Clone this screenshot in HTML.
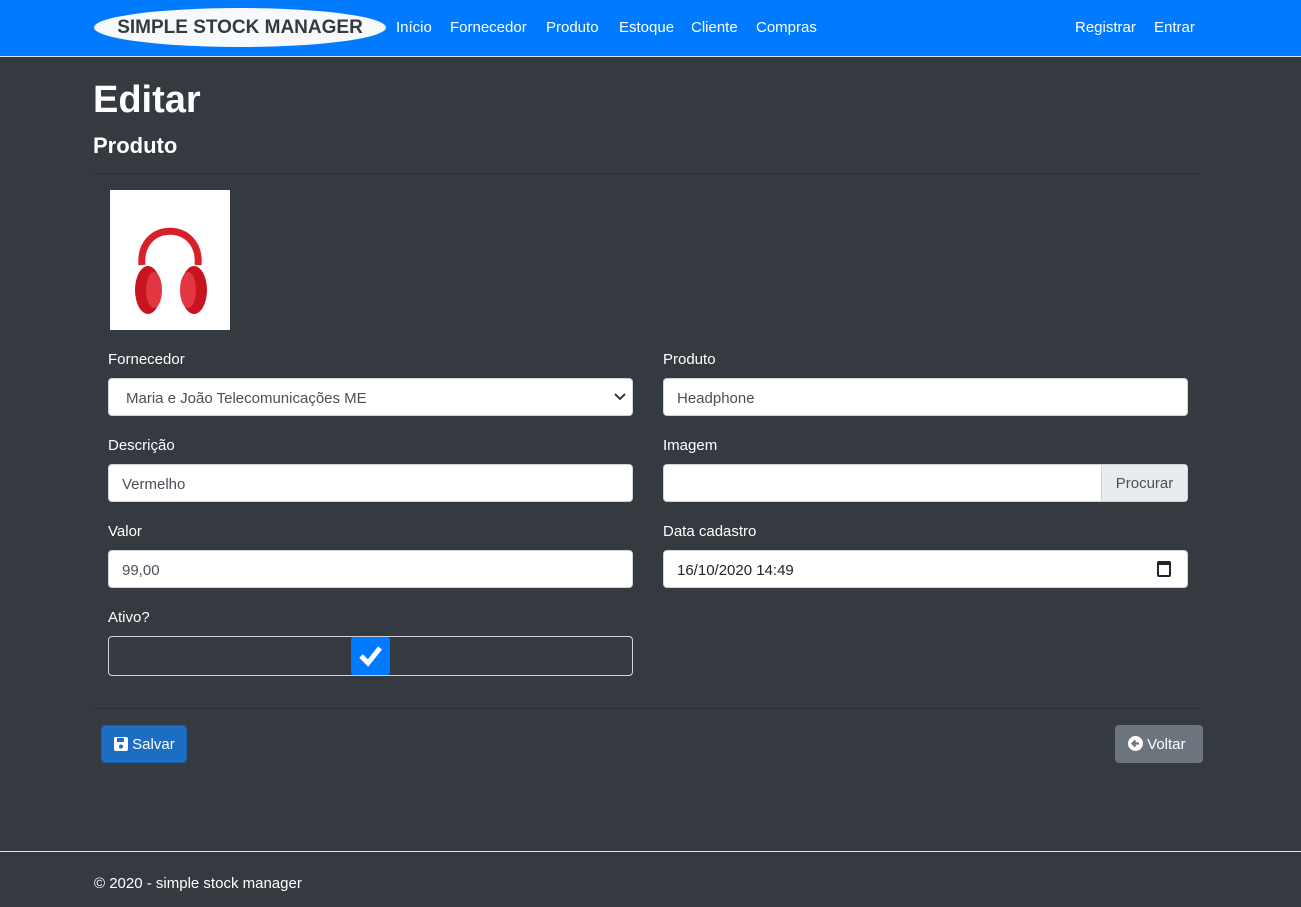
<!DOCTYPE html>
<html><head><meta charset="utf-8"><style>
*{box-sizing:border-box;margin:0;padding:0}
body{width:1301px;height:907px;background:#343a40;font-family:"Liberation Sans",sans-serif;color:#fff;position:relative;overflow:hidden;font-size:15px}
.nav{position:absolute;left:0;top:0;width:1301px;height:57px;background:#007bff;border-bottom:1px solid #e0e0e0}
.brand{position:absolute;left:94px;top:8px;width:292px;height:39px;background:#f8f9fa;border-radius:50%;color:#343a40;font-weight:bold;font-size:19px;text-align:center;line-height:39px}
.nav a{position:absolute;top:19px;color:#fff;font-size:15px}
.abs{position:absolute}
label{position:absolute;font-size:15px;color:#fff;margin-top:1px}
.in{position:absolute;height:38px;background:#fff;border:1px solid #ced4da;border-radius:4px;color:#495057;font-size:15px;line-height:40px;padding-left:13px}
hr{position:absolute;border:0;border-top:1px solid #2b3035;height:0}
.btn{position:absolute;height:38px;border-radius:4px;font-size:15px;line-height:38px;color:#fff}
</style></head><body>
<div class="nav">
<div class="brand">SIMPLE STOCK MANAGER</div>
<a style="left:396px">Início</a><a style="left:450px">Fornecedor</a><a style="left:546px">Produto</a><a style="left:619px">Estoque</a><a style="left:691px">Cliente</a><a style="left:756px">Compras</a>
<a style="left:1075px">Registrar</a><a style="left:1154px">Entrar</a>
</div>
<div class="abs" style="left:93px;top:79px;font-size:38px;font-weight:bold">Editar</div>
<div class="abs" style="left:93px;top:133px;font-size:22px;font-weight:bold">Produto</div>
<hr style="left:93px;top:173px;width:1108px">
<div class="abs" style="left:110px;top:190px;width:120px;height:140px;background:#fff">
<svg width="120" height="140" viewBox="0 0 120 140"><path d="M32 75 C28 30 92 30 88 75" fill="none" stroke="#d8202a" stroke-width="7"/><ellipse cx="38" cy="100" rx="13" ry="24" fill="#c8141e"/><ellipse cx="84" cy="100" rx="13" ry="24" fill="#c8141e"/><ellipse cx="44" cy="100" rx="8" ry="18" fill="#e23640"/><ellipse cx="78" cy="100" rx="8" ry="18" fill="#e23640"/></svg>
</div>
<label style="left:108px;top:350px">Fornecedor</label>
<div class="in" style="left:108px;top:378px;width:525px;padding-left:17px">Maria e João Telecomunicações ME<svg style="position:absolute;right:6px;top:14px" width="12" height="8"><path d="M1 1L6 6L11 1" fill="none" stroke="#343a40" stroke-width="2"/></svg></div>
<label style="left:663px;top:350px">Produto</label>
<div class="in" style="left:663px;top:378px;width:525px">Headphone</div>
<label style="left:108px;top:436px">Descrição</label>
<div class="in" style="left:108px;top:464px;width:525px">Vermelho</div>
<label style="left:663px;top:436px">Imagem</label>
<div class="in" style="left:663px;top:464px;width:525px"><div style="position:absolute;right:0;top:0;width:86px;height:36px;background:#e9ecef;border-left:1px solid #ced4da;text-align:center;line-height:38px">Procurar</div></div>
<label style="left:108px;top:522px">Valor</label>
<div class="in" style="left:108px;top:550px;width:525px">99,00</div>
<label style="left:663px;top:522px">Data cadastro</label>
<div class="in" style="left:663px;top:550px;width:525px;color:#212529">16/10/2020 14:49<span style="position:absolute;right:16px;top:10px;width:14px;height:16px;border:2px solid #212529;border-top-width:4px;border-radius:2px"></span></div>
<label style="left:108px;top:608px">Ativo?</label>
<div class="abs" style="left:108px;top:636px;width:525px;height:40px;border:1px solid #ced4da;border-radius:4px"></div>
<div class="abs" style="left:351px;top:637px;width:39px;height:38px;background:#007bff;border-radius:3px"><svg width="39" height="38"><path d="M10 19 L17 26 L29 11" fill="none" stroke="#fff" stroke-width="5"/></svg></div>
<hr style="left:93px;top:708px;width:1108px">
<div class="btn" style="left:101px;top:725px;width:86px;background:#1b6ec2;border:1px solid #1861ac;padding-left:12px;line-height:38px"><svg width="14" height="14" style="vertical-align:-2px"><rect x="0" y="0" width="14" height="14" rx="2" fill="#fff"/><rect x="3" y="1" width="7" height="4" fill="#1b6ec2"/><circle cx="7" cy="9.5" r="2" fill="#1b6ec2"/></svg> Salvar</div>
<div class="btn" style="left:1115px;top:725px;width:88px;background:#6c757d;padding-left:13px;line-height:40px"><svg width="15" height="15" style="vertical-align:-2px"><circle cx="7.5" cy="7.5" r="7.5" fill="#fff"/><path d="M11 7.5H5M7.5 4.5L4.5 7.5L7.5 10.5" stroke="#6c757d" stroke-width="2.2" fill="none"/></svg> Voltar</div>
<div class="abs" style="left:0;top:851px;width:1301px;border-top:1px solid #dee2e6"></div>
<div class="abs" style="left:94px;top:875px">© 2020 - simple stock manager</div>
</body></html>
